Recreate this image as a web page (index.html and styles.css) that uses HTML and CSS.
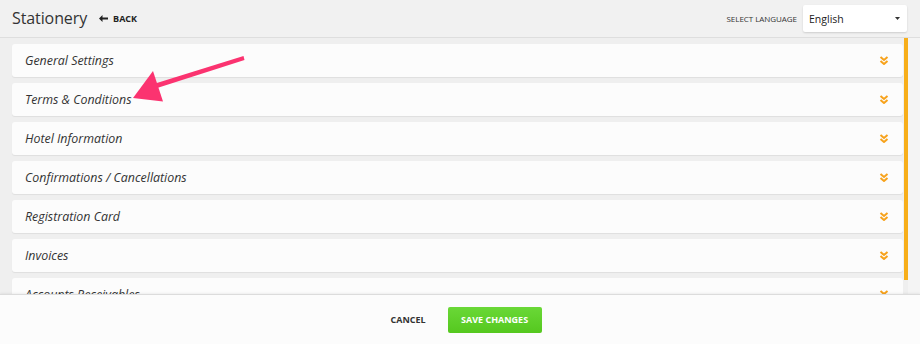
FILE: index.html
```html
<!DOCTYPE html>
<html>
<head>
<meta charset="utf-8">
<link rel="stylesheet" href="styles.css">
</head>
<body>
<div class="page">
  <header class="topbar">
    <div class="title-group">
      <h1 class="title">Stationery</h1>
      <a class="back"><svg class="back-arrow" width="9" height="7" viewBox="0 0 9 7"><path d="M0 3.5L3.5 0v2.5H9v2H3.5V7z" fill="#222"/></svg>BACK</a>
    </div>
    <div class="lang-group">
      <span class="lang-label">SELECT LANGUAGE</span>
      <div class="select">
        <span>English</span>
        <svg class="caret" width="5" height="3" viewBox="0 0 5 3"><path d="M0 0h5L2.5 3z" fill="#333"/></svg>
      </div>
    </div>
  </header>
  <main class="main">
    <div class="list">
      <div class="panel"><span class="panel-title">General Settings</span><svg class="chev" viewBox="0 0 10 9" width="10" height="9"><path d="M1.5 1l3.5 3 3.5-3M1.5 5l3.5 3 3.5-3" fill="none" stroke="#f7a21b" stroke-width="2"/></svg></div>
      <div class="panel"><span class="panel-title">Terms &amp; Conditions</span><svg class="chev" viewBox="0 0 10 9" width="10" height="9"><path d="M1.5 1l3.5 3 3.5-3M1.5 5l3.5 3 3.5-3" fill="none" stroke="#f7a21b" stroke-width="2"/></svg></div>
      <div class="panel"><span class="panel-title">Hotel Information</span><svg class="chev" viewBox="0 0 10 9" width="10" height="9"><path d="M1.5 1l3.5 3 3.5-3M1.5 5l3.5 3 3.5-3" fill="none" stroke="#f7a21b" stroke-width="2"/></svg></div>
      <div class="panel"><span class="panel-title">Confirmations / Cancellations</span><svg class="chev" viewBox="0 0 10 9" width="10" height="9"><path d="M1.5 1l3.5 3 3.5-3M1.5 5l3.5 3 3.5-3" fill="none" stroke="#f7a21b" stroke-width="2"/></svg></div>
      <div class="panel"><span class="panel-title">Registration Card</span><svg class="chev" viewBox="0 0 10 9" width="10" height="9"><path d="M1.5 1l3.5 3 3.5-3M1.5 5l3.5 3 3.5-3" fill="none" stroke="#f7a21b" stroke-width="2"/></svg></div>
      <div class="panel"><span class="panel-title">Invoices</span><svg class="chev" viewBox="0 0 10 9" width="10" height="9"><path d="M1.5 1l3.5 3 3.5-3M1.5 5l3.5 3 3.5-3" fill="none" stroke="#f7a21b" stroke-width="2"/></svg></div>
      <div class="panel"><span class="panel-title">Accounts Receivables</span><svg class="chev" viewBox="0 0 10 9" width="10" height="9"><path d="M1.5 1l3.5 3 3.5-3M1.5 5l3.5 3 3.5-3" fill="none" stroke="#f7a21b" stroke-width="2"/></svg></div>
    </div>
    <div class="scrolltrack"><div class="thumb"></div></div>
    <div class="gutter"></div>
  </main>
  <footer class="footer">
    <button class="btn-cancel">CANCEL</button>
    <button class="btn-save">SAVE CHANGES</button>
  </footer>
  <svg class="annotation" width="920" height="344" viewBox="0 0 920 344">
    <path d="M243.5 56 L152 84.5 L154 89 L244.5 60 Z" fill="#fb3370"/>
    <path d="M133 98 L153 71 L163 101.5 Z" fill="#fb3370"/>
  </svg>
</div>
</body>
</html>
```
FILE: styles.css
```css
* { box-sizing: border-box; }
html, body { margin: 0; padding: 0; }
body {
  width: 920px;
  height: 344px;
  overflow: hidden;
  background: #efefef;
  font-family: "Open Sans", "Noto Sans", sans-serif;
  color: #333;
}
.page {
  position: relative;
  width: 920px;
  height: 344px;
  display: flex;
  flex-direction: column;
}
.topbar {
  height: 38px;
  flex: none;
  display: flex;
  align-items: center;
  justify-content: space-between;
  padding: 0 13px 0 12px;
  border-bottom: 1px solid #dedede;
  background: #f1f1f1;
}
.title-group {
  display: flex;
  align-items: center;
}
.title {
  margin: 0 0 1px 0;
  font-size: 16px;
  font-weight: 400;
  color: #333;
  letter-spacing: -0.1px;
}
.back {
  margin-left: 12px;
  font-size: 9px;
  font-weight: 700;
  color: #222;
  display: flex;
  align-items: center;
}
.back-arrow {
  display: block;
  margin-right: 5px;
}
.lang-group {
  display: flex;
  align-items: center;
}
.lang-label {
  font-size: 8px;
  color: #333;
  margin-right: 6px;
  letter-spacing: -0.05px;
}
.select {
  width: 104px;
  height: 27px;
  background: #fff;
  box-shadow: 0 1px 2px rgba(0,0,0,0.15);
  border-radius: 2px;
  display: flex;
  align-items: center;
  justify-content: space-between;
  padding: 0 7px 0 6px;
  font-size: 10.5px;
  color: #222;
}
.main {
  flex: 1;
  display: flex;
  overflow: hidden;
  min-height: 0;
}
.list {
  flex: 1;
  padding: 6px 0 0 12px;
  display: flex;
  flex-direction: column;
  gap: 6px;
}
.panel {
  flex: none;
  height: 33px;
  background: #fcfcfc;
  border-radius: 3px;
  box-shadow: 0 1px 1px rgba(0,0,0,0.07);
  display: flex;
  align-items: center;
  justify-content: space-between;
  padding: 0 14px 0 13px;
}
.panel-title {
  font-style: italic;
  font-size: 12.4px;
  color: #333;
}
.chev { display: block; }
.scrolltrack {
  width: 5px;
  flex: none;
  background: #efefef;
  padding-left: 1px;
}
.thumb {
  width: 4px;
  height: 243px;
  margin-top: -1px;
  background: #f7ae1a;
}
.gutter {
  width: 12px;
  flex: none;
  background: #f4f4f4;
}
.footer {
  height: 50px;
  flex: none;
  background: #fcfcfc;
  border-top: 1px solid #dcdcdc;
  box-shadow: 0 -1px 2px rgba(0,0,0,0.06);
  display: flex;
  align-items: center;
  justify-content: center;
  padding-left: 12px;
}
.btn-cancel {
  border: none;
  background: transparent;
  font-family: inherit;
  font-size: 9px;
  font-weight: 700;
  color: #333;
  padding: 0;
  margin-right: 22px;
}
.btn-save {
  width: 94px;
  height: 26px;
  border: none;
  border-radius: 2px;
  background: linear-gradient(#6ad837, #55c81f);
  color: #fff;
  font-family: inherit;
  font-size: 9px;
  font-weight: 700;
  padding: 0;
}
.annotation {
  position: absolute;
  left: 0;
  top: 0;
  pointer-events: none;
}
```
